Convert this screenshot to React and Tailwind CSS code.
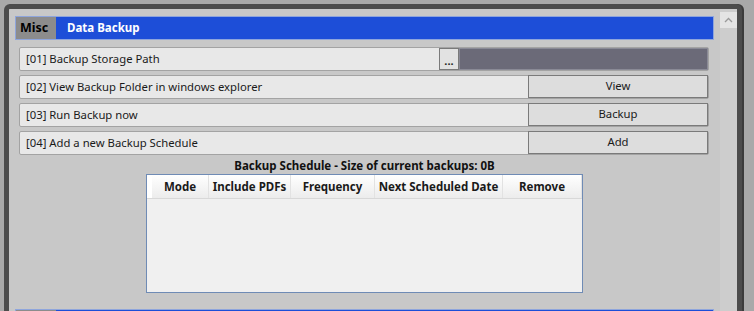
import React from "react";

const font = { fontFamily: '"Noto Sans", "Open Sans", sans-serif' };

const actions = [
  { id: "02", label: "View Backup Folder in windows explorer", button: "View" },
  { id: "03", label: "Run Backup now", button: "Backup" },
  { id: "04", label: "Add a new Backup Schedule", button: "Add" },
];

const columns = [
  { name: "Mode", width: "w-[57px]" },
  { name: "Include PDFs", width: "w-[82px]" },
  { name: "Frequency", width: "w-[84px]" },
  { name: "Next Scheduled Date", width: "w-[128px]" },
  { name: "Remove", width: "w-[79px]" },
];

function SectionHeader({ title }) {
  return (
    <div className="flex h-[24px] border border-[#8ea5dc] shrink-0">
      <div className="w-[40px] bg-[#8c8c8c] flex items-center pl-[4px] text-[12.5px] font-bold text-black">
        {title && "Misc"}
      </div>
      <div className="flex-1 bg-[#1d4ed8] flex items-center pl-[11px] text-[11.5px] font-bold text-white">
        {title}
      </div>
    </div>
  );
}

function ActionRow({ id, label, button }) {
  return (
    <div className="flex h-[24px] ml-[4px] mr-[5px] rounded-[2px] border border-[#a3a3a3] bg-[#e8e8e8]">
      <div className="flex-1 flex items-center pl-[6px] text-[11.3px] text-[#1a1a1a]">
        [{id}] {label}
      </div>
      <button className="w-[180px] h-[23px] -mt-px border border-[#7a7a7a] bg-[#dddddd] text-[11.3px] text-[#1a1a1a] flex items-center justify-center">
        {button}
      </button>
    </div>
  );
}

export default function App() {
  return (
    <div
      className="w-[754px] h-[311px] overflow-hidden bg-[#a9a9a9] pt-[4px] pl-[4px]"
      style={font}
    >
      <div className="w-[738px] h-[330px] flex border-[5px] border-b-0 border-[#4c4c4c] rounded-t-[6px] bg-[#c8c8c8] shadow-[2px_0_0_#3c3c3c]">
        <div className="flex-1 flex flex-col pt-[7px] pl-[6px] pr-[6px]">
          <SectionHeader title="Data Backup" />

          <div className="flex flex-col gap-[4px] mt-[7px]">
            <div className="flex h-[24px] ml-[4px] mr-[5px] rounded-[2px] border border-[#a3a3a3] bg-[#e8e8e8]">
              <div className="flex-1 flex items-center pl-[6px] text-[11.3px] text-[#1a1a1a]">
                [01] Backup Storage Path
              </div>
              <div className="w-[20px] border border-[#7a7a7a] bg-[#e2e2e2] flex items-end justify-center pb-[3px] text-[11px] font-bold leading-none text-[#222]">
                ...
              </div>
              <div className="w-[249px] bg-[#6b6a78] border border-[#8a8a96]" />
            </div>
            {actions.map((a) => (
              <ActionRow key={a.id} {...a} />
            ))}
          </div>

          <div className="text-center text-[11.5px] font-bold text-[#111] mt-[2px] leading-[17px]">
            Backup Schedule - Size of current backups: 0B
          </div>

          <div className="mx-auto w-[437px] h-[119px] border border-[#6f8bb5] bg-[#f0f0f0] flex flex-col">
            <div className="flex h-[24px] bg-gradient-to-b from-[#ffffff] to-[#ececec] border-b border-[#d8d8d8]">
              <div className="w-[5px] bg-white" />
              {columns.map((c) => (
                <div
                  key={c.name}
                  className={`${c.width} flex items-center justify-center text-[11.5px] font-bold text-[#1a1a1a] border-r border-[#e2e2e2]`}
                >
                  {c.name}
                </div>
              ))}
            </div>
          </div>

          <div className="mt-[16px]">
            <SectionHeader title="" />
          </div>
        </div>

        <div className="w-[17px] bg-[#cdcdcd] pt-[3px]">
          <div className="h-[16px] bg-[#e4e4e4] flex items-center justify-center">
            <svg width="9" height="6" viewBox="0 0 9 6">
              <polyline
                points="1,5 4.5,1.5 8,5"
                fill="none"
                stroke="#9a9a9a"
                strokeWidth="1.3"
              />
            </svg>
          </div>
        </div>
      </div>
    </div>
  );
}
